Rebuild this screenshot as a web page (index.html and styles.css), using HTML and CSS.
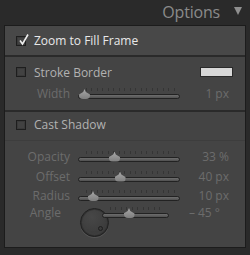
FILE: index.html
```html
<!DOCTYPE html>
<html lang="en">
<head>
  <meta charset="UTF-8">
  <title>Options</title>
  <link rel="stylesheet" href="styles.css">
</head>
<body>

  <header class="panel-header">
    <span class="panel-title">Options</span>
    <span class="collapse-arrow"></span>
  </header>

  <div class="panel">

    <div class="section section-main">
      <label class="check-row">
        <span class="checkbox checked">
          <svg class="checkmark" width="12" height="13" viewBox="0 0 12 13">
            <path d="M2 7.5 L4.5 11 L10 1.5" fill="none" stroke="#ededed" stroke-width="1.6"/>
          </svg>
        </span>
        <span class="check-text bright">Zoom to Fill Frame</span>
      </label>
    </div>

    <div class="section section-stroke">
      <div class="check-row">
        <span class="checkbox"></span>
        <span class="check-text">Stroke Border</span>
        <span class="swatch"></span>
      </div>
      <div class="slider-row width-row">
        <span class="slider-label">Width</span>
        <div class="slider">
          <div class="ticks"></div>
          <div class="track"></div>
          <div class="thumb" style="left: 6.5px"></div>
        </div>
        <span class="slider-value">1 px</span>
      </div>
    </div>

    <div class="section section-shadow">
      <div class="check-row shadow-head">
        <span class="checkbox"></span>
        <span class="check-text">Cast Shadow</span>
      </div>
      <div class="shadow-controls">
        <div class="slider-row">
          <span class="slider-label">Opacity</span>
          <div class="slider">
            <div class="ticks"></div>
            <div class="track"></div>
            <div class="thumb" style="left: 36.5px"></div>
          </div>
          <span class="slider-value">33 %</span>
        </div>
        <div class="slider-row">
          <span class="slider-label">Offset</span>
          <div class="slider">
            <div class="ticks"></div>
            <div class="track"></div>
            <div class="thumb" style="left: 42px"></div>
          </div>
          <span class="slider-value">40 px</span>
        </div>
        <div class="slider-row short-row">
          <span class="slider-label">Radius</span>
          <div class="slider">
            <div class="ticks"></div>
            <div class="track"></div>
            <div class="thumb" style="left: 15px"></div>
          </div>
          <span class="slider-value">10 px</span>
        </div>
        <div class="angle-row">
          <span class="slider-label">Angle</span>
          <div class="knob"><span class="knob-dot"></span></div>
          <div class="slider">
            <div class="ticks"></div>
            <div class="track"></div>
            <div class="thumb" style="left: 27px"></div>
          </div>
          <span class="slider-value angle-value">– 45 °</span>
        </div>
      </div>
    </div>

  </div>

</body>
</html>
```

FILE: styles.css
```css
body {
  margin: 0;
  padding: 0 4px;
  background-color: #2a2a2a;
  font-family: "Open Sans", "Liberation Sans", sans-serif;
  font-size: 12px;
  height: 255px;
  overflow: hidden;
}

/* header */
.panel-header {
  height: 25px;
  display: flex;
  justify-content: flex-end;
  align-items: center;
  gap: 14px;
  padding-right: 4px;
}

.panel-title {
  color: #8a8a8a;
  font-size: 16px;
  letter-spacing: -0.2px;
  margin-top: -1px;
}

.collapse-arrow {
  width: 0;
  height: 0;
  border-left: 4.5px solid transparent;
  border-right: 4.5px solid transparent;
  border-top: 8px solid #8f8f8f;
  margin-top: -3px;
}

/* panel */
.panel {
  border: 1px solid #1c1c1c;
  background-color: #444444;
  height: 221px;
}

.section {
  border-bottom: 2px solid #2a2a2a;
}

.section:last-child {
  border-bottom: none;
}

.section-main {
  background-color: #484848;
  height: 29px;
}

.section-stroke {
  height: 53px;
}

.check-row {
  display: flex;
  align-items: center;
  padding-left: 11px;
  height: 29px;
}

.checkbox {
  position: relative;
  width: 8px;
  height: 8px;
  border: 1px solid #1e1e1e;
  background-color: #424242;
  box-shadow: inset 0 0 0 1px #3a3a3a;
  margin-right: 8px;
}

.checkmark {
  position: absolute;
  left: 1px;
  top: -4px;
}

.check-text {
  color: #b2b2b2;
}

.check-text.bright {
  color: #e8e8e8;
}

.section-stroke .check-row {
  height: 30px;
}

.swatch {
  margin-left: auto;
  margin-right: 12px;
  width: 31px;
  height: 8px;
  background-color: #d8d8d8;
  border: 1px solid #2a2a2a;
}

/* sliders */
.slider-row, .angle-row {
  display: grid;
  grid-template-columns: 65px 102px 1fr;
  column-gap: 8px;
  align-items: center;
  padding-right: 16px;
  height: 20px;
  color: #6c6c6c;
}

.width-row {
  height: 14px;
  margin-top: -2px;
}

.slider-label {
  text-align: right;
}

.slider-value {
  text-align: right;
}

.slider {
  position: relative;
  height: 12px;
  margin-top: 1px;
}

.ticks {
  position: absolute;
  left: 8px;
  right: 5px;
  top: 0;
  height: 3px;
  background: repeating-linear-gradient(to right, #353535 0 1px, transparent 1px 5.5px);
}

.track {
  position: absolute;
  left: 0;
  right: 0;
  top: 6px;
  height: 3px;
  border: 1px solid #222222;
  border-radius: 3px;
  background: linear-gradient(#6e6e6e, #505050);
}

.thumb {
  position: absolute;
  top: 1px;
  width: 11px;
  height: 10px;
  margin-left: -5.5px;
  background: linear-gradient(#a8a8a8, #7e7e7e);
  clip-path: polygon(50% 0, 62% 30%, 100% 55%, 100% 100%, 0 100%, 0 55%, 38% 30%);
  border-radius: 0 0 4px 4px;
}

/* shadow section */
.shadow-head {
  height: 25px;
  padding-bottom: 3px;
  border-bottom: 1px solid #3d3d3d;
}

.shadow-controls {
  padding-top: 5px;
}

.short-row {
  height: 19px;
}

.angle-row {
  grid-template-columns: 65px 30px 69px 1fr;
  column-gap: 0;
  align-items: start;
  height: 40px;
}

.angle-row .slider-label {
  line-height: 16px;
  margin-right: 9px;
}

.angle-row .slider {
  margin-left: 2px;
  margin-top: 2px;
}

.angle-value {
  line-height: 16px;
  margin-right: 9px;
}

.knob {
  position: relative;
  width: 27px;
  height: 27px;
  border-radius: 50%;
  border: 1px solid #1f1f1f;
  background: radial-gradient(circle at 40% 30%, #474747, #3a3a3a 80%);
  box-shadow: 0 1px 0 #555555, inset 0 0 0 1px #333333, inset 0 -2px 2px #404040;
  margin-left: 10px;
  margin-top: 3px;
}

.knob-dot {
  position: absolute;
  left: 17px;
  top: 17px;
  width: 3px;
  height: 3px;
  border-radius: 50%;
  border: 1px solid #1e1e1e;
  background-color: #3a3a3a;
}
```
